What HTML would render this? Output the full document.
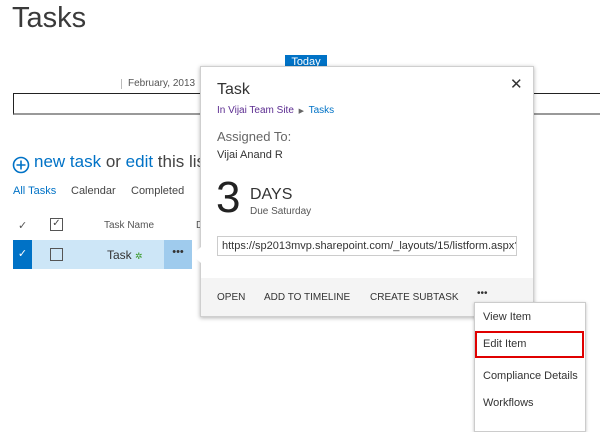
<!DOCTYPE html>
<html><head><meta charset="utf-8"><style>
*{margin:0;padding:0;box-sizing:border-box}
body{width:600px;height:420px;overflow:hidden;background:#fff;font-family:"Liberation Sans",sans-serif;position:relative;color:#444}
.a{position:absolute;white-space:nowrap}
</style></head><body>
<div class="a" style="left:12px;top:2px;font-size:29px;color:#3a3a3a;font-weight:300">Tasks</div>
<div class="a" style="left:285px;top:55px;width:42px;height:14px;background:#0072c6;color:#fff;font-size:11px;text-align:center;line-height:14px">Today</div>
<div class="a" style="left:121px;top:79px;width:1px;height:10px;background:#bbb"></div>
<div class="a" style="left:128px;top:78px;font-size:10px;color:#555">February, 2013</div>
<div class="a" style="left:13px;top:93px;width:600px;height:22px;border:1px solid #222;border-bottom:2px solid #999;border-right:none"></div>
<svg class="a" style="left:12px;top:156px" width="18" height="18" viewBox="0 0 18 18"><circle cx="9" cy="9" r="7.5" fill="none" stroke="#0072c6" stroke-width="1.6"/><path d="M9 4.5v9M4.5 9h9" stroke="#0072c6" stroke-width="1.6"/></svg>
<div class="a" style="left:34px;top:152px;font-size:17px;color:#0072c6">new task <span style="color:#444">or</span> edit <span style="color:#444">this list</span></div>
<div class="a" style="left:13px;top:185px;font-size:11px;color:#0072c6">All Tasks</div>
<div class="a" style="left:71px;top:185px;font-size:11px;color:#444">Calendar</div>
<div class="a" style="left:131px;top:185px;font-size:11px;color:#444">Completed</div>
<div class="a" style="left:18px;top:219px;font-size:11px;color:#555">✓</div>
<div class="a" style="left:50px;top:218px;width:13px;height:13px;border:1px solid #555;font-size:10px;line-height:10px;text-align:center">✓</div>
<div class="a" style="left:104px;top:220px;font-size:10px;color:#555">Task Name</div>
<div class="a" style="left:196px;top:220px;font-size:10px;color:#555">D</div>
<div class="a" style="left:13px;top:240px;width:19px;height:29px;background:#0072c6;color:#fff;font-size:11px;text-align:center;line-height:29px">✓</div>
<div class="a" style="left:32px;top:240px;width:132px;height:29px;background:#cde6f7"></div>
<div class="a" style="left:164px;top:240px;width:28px;height:29px;background:#9fcbed;color:#333;font-size:11px;text-align:center;line-height:24px">•••</div>
<div class="a" style="left:50px;top:248px;width:13px;height:13px;border:1px solid #555"></div>
<div class="a" style="left:107px;top:248px;font-size:12px;color:#333">Task <span style="color:#3a9a2a;font-size:9px">✲</span></div>
<div class="a" style="left:200px;top:66px;width:334px;height:251px;background:#fff;border:1px solid #cfcfcf;box-shadow:0 1px 4px rgba(0,0,0,.3)"></div>
<div class="a" style="left:192px;top:247px;width:0;height:0;border-top:8px solid transparent;border-bottom:8px solid transparent;border-right:9px solid #fff"></div>
<div class="a" style="left:217px;top:81px;font-size:16px;color:#333">Task</div>
<div class="a" style="left:510px;top:75px;font-size:15px;color:#333">✕</div>
<div class="a" style="left:217px;top:105px;font-size:10px;color:#5c2d91">In Vijai Team Site <span style="color:#666;font-size:7px">&nbsp;▶&nbsp;</span> <span style="color:#0072c6">Tasks</span></div>
<div class="a" style="left:217px;top:129px;font-size:13px;color:#666">Assigned To:</div>
<div class="a" style="left:217px;top:149px;font-size:11px;color:#333">Vijai Anand R</div>
<div class="a" style="left:216px;top:176px;font-size:44px;color:#222;line-height:44px;font-weight:300">3</div>
<div class="a" style="left:250px;top:186px;font-size:16px;color:#333">DAYS</div>
<div class="a" style="left:250px;top:206px;font-size:10px;color:#555">Due Saturday</div>
<div class="a" style="left:217px;top:236px;width:300px;height:20px;border:1px solid #ccc;font-size:11px;color:#333;line-height:18px;padding-left:4px;overflow:hidden">https://sp2013mvp.sharepoint.com/_layouts/15/listform.aspx?</div>
<div class="a" style="left:201px;top:278px;width:332px;height:38px;background:#f4f4f4"></div>
<div class="a" style="left:217px;top:292px;font-size:10px;color:#333">OPEN</div>
<div class="a" style="left:264px;top:292px;font-size:10px;color:#333">ADD TO TIMELINE</div>
<div class="a" style="left:370px;top:292px;font-size:10px;color:#333">CREATE SUBTASK</div>
<div class="a" style="left:477px;top:288px;font-size:10px;color:#333">•••</div>
<div class="a" style="left:474px;top:302px;width:112px;height:130px;background:#fff;border:1px solid #ccc;box-shadow:0 1px 3px rgba(0,0,0,.25)"></div>
<div class="a" style="left:483px;top:311px;font-size:11px;color:#333">View Item</div>
<div class="a" style="left:475px;top:331px;width:109px;height:27px;border:2px solid #e00000"></div>
<div class="a" style="left:483px;top:338px;font-size:11px;color:#333">Edit Item</div>
<div class="a" style="left:483px;top:370px;font-size:11px;color:#333">Compliance Details</div>
<div class="a" style="left:483px;top:397px;font-size:11px;color:#333">Workflows</div>
</body></html>
